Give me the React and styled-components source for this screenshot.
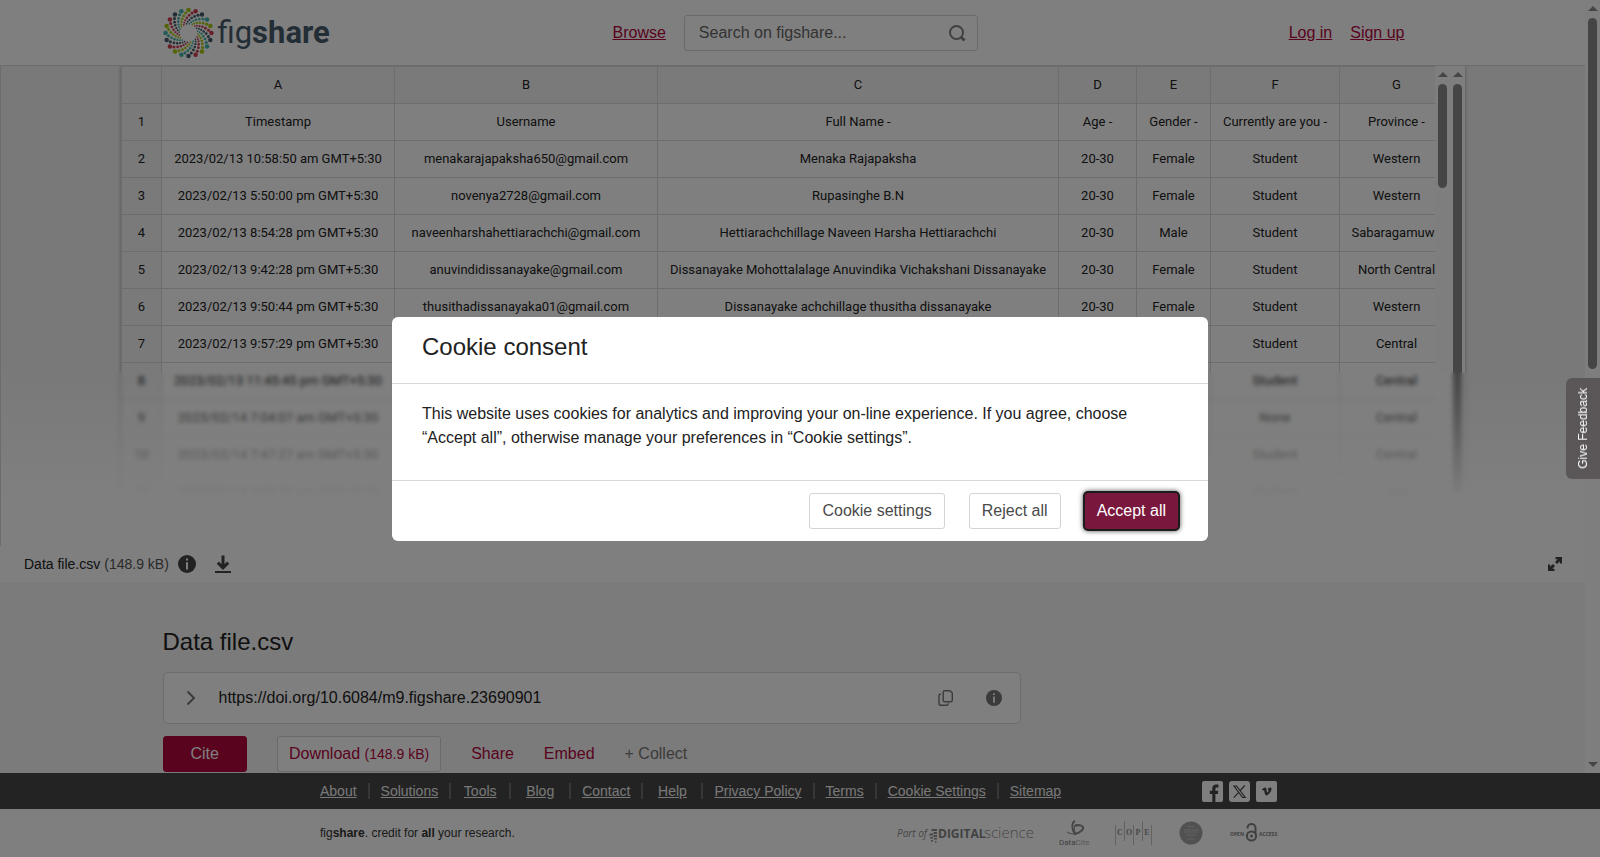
import React from 'react';
import styled, { createGlobalStyle } from 'styled-components';

const GlobalStyle = createGlobalStyle`
  *, *::before, *::after {
    box-sizing: border-box;
  }

  body {
    margin: 0;
    font-family: "Liberation Sans", Arial, sans-serif;
    font-size: 16px;
    line-height: 24px;
    color: #222;
  }
`;

const Page = styled.div`
  display: flex;
  flex-direction: column;
  height: 100vh;
  overflow: hidden;
`;

const ScrollArea = styled.div`
  flex: 1;
  min-height: 0;
  display: flex;
  overflow: hidden;
  background: #f6f6f6;
`;

const Content = styled.div`
  flex: 1;
  min-width: 0;
`;

/* Scrollbars */
const Track = styled.div`
  flex: none;
  width: 15px;
  padding: 6px 3px;
  display: flex;
  flex-direction: column;
  align-items: center;
  background: #fcfcfc;
`;

const Arrow = styled.span`
  width: 0;
  height: 0;
  border: 5px solid transparent;
  border-top-width: ${(props) => (props.$down ? '5px' : '0')};
  border-bottom-width: ${(props) => (props.$down ? '0' : '5px')};
  border-top-color: ${(props) => (props.$down ? '#8b8b8b' : 'transparent')};
  border-bottom-color: ${(props) => (props.$down ? 'transparent' : '#8b8b8b')};
`;

const Thumb = styled.span`
  width: 9px;
  height: ${(props) => props.$size};
  margin: 7px 0 auto;
  border-radius: 5px;
  background: #8b8b8b;
`;

/* Header */
const Header = styled.header`
  height: 65px;
  background: #fff;
`;

const HeaderInner = styled.div`
  display: grid;
  grid-template-columns: 450px 365px 1fr;
  align-items: center;
  max-width: 1260px;
  height: 65px;
  margin: 0 auto;
`;

const LogoLink = styled.a`
  display: flex;
  align-items: center;
  gap: 4px;
  color: #465b6b;
  text-decoration: none;
`;

const Wordmark = styled.span`
  font-family: Roboto, sans-serif;
  font-size: 31px;
  font-weight: ${(props) => (props.$bold ? 700 : 400)};
  line-height: 40px;
`;

const TextLink = styled.a`
  color: #b3063d;
  text-decoration: underline;
`;

const HeaderNav = styled.nav`
  display: flex;
  align-items: center;
  gap: 18px;
`;

const AccountNav = styled.nav`
  display: flex;
  justify-content: flex-end;
  gap: 18px;
  padding-right: 18px;
`;

const SearchForm = styled.form`
  flex: 1;
  display: flex;
  align-items: center;
  height: 36px;
  padding: 0 11px 0 14px;
  border: 1px solid #d4d4d4;
  border-radius: 3px;
`;

const SearchInput = styled.input`
  flex: 1;
  min-width: 0;
  padding: 0;
  border: none;
  outline: none;
  background: none;
  font: inherit;

  &::placeholder {
    color: #666;
    opacity: 1;
  }
`;

const IconButton = styled.button`
  display: flex;
  align-items: center;
  justify-content: center;
  padding: 0;
  border: none;
  background: none;
  color: ${(props) => props.$color || '#444'};
  cursor: pointer;
`;

/* File viewer */
const Viewer = styled.section`
  position: relative;
  height: 481px;
  padding: 0 120px;
  border-top: 1px solid #d8d8d8;
  border-left: 1px solid #d8d8d8;
  background: #f3f3f3;
  overflow: hidden;
`;

const Sheet = styled.div`
  display: flex;
  height: 480px;
  background: #fff;
  box-shadow: 0 0 4px rgba(0, 0, 0, 0.3);
`;

const SheetScroll = styled.div`
  flex: 1;
  min-width: 0;
  overflow: hidden;
`;

const SheetBar = styled.div`
  display: flex;
  height: ${(props) => props.$height};
`;

const Table = styled.table`
  width: 1332px;
  table-layout: fixed;
  border-collapse: collapse;
  font-family: Roboto, sans-serif;
  font-size: 13px;
  line-height: 16px;
  color: #222;
`;

const Cell = styled.td`
  height: 37px;
  padding: 0;
  border: 1px solid #dadada;
  text-align: center;
  white-space: nowrap;
`;

const HeadCell = styled(Cell)`
  background: #f5f5f5;
  font-weight: 400;
`;

const Fade = styled.div`
  position: absolute;
  top: 306px;
  right: 0;
  bottom: 0;
  left: 0;
  backdrop-filter: blur(2px);
  background: linear-gradient(rgba(255, 255, 255, 0), #fff 74%);
`;

const FileBar = styled.div`
  display: flex;
  align-items: center;
  height: 36px;
  padding: 0 23px 0 24px;
  background: #fff;
  font-size: 14px;
`;

const FileSize = styled.span`
  margin: 0 9px 0 4px;
  color: #555;
`;

const FileActions = styled.div`
  flex: 1;
  display: flex;
  gap: 18px;
`;

/* Item details */
const Details = styled.main`
  max-width: 1260px;
  margin: 0 auto;
  padding-top: 45px;
`;

const Title = styled.h1`
  margin: 0;
  font-size: 24px;
  font-weight: 400;
  line-height: 30px;
`;

const DoiBox = styled.div`
  display: flex;
  align-items: center;
  max-width: 858px;
  height: 52px;
  margin: 15px 0 12px;
  padding: 0 18px 0 22px;
  border: 1px solid #d8d8d8;
  border-radius: 5px;
  background: #fff;
`;

const DoiText = styled.span`
  flex: 1;
  margin-left: 23px;
`;

const DoiActions = styled.div`
  display: flex;
  gap: 32px;
`;

const Actions = styled.div`
  display: flex;
  gap: 30px;
`;

const Button = styled.button`
  height: 36px;
  padding: 0 12px;
  border: 1px solid #d4d4d4;
  border-radius: 3px;
  background: #fff;
  color: #4a4a4a;
  font: inherit;
  cursor: pointer;

  small {
    font-size: 14px;
  }
`;

const CiteButton = styled(Button)`
  padding: 0 27px;
  border-color: #b3063d;
  background: #b3063d;
  color: #fff;
`;

const DownloadButton = styled(Button)`
  padding: 0 11px;
  color: #b3063d;
`;

const PlainButton = styled(Button)`
  padding: 0;
  border: none;
  background: none;
  color: ${(props) => (props.$muted ? '#777' : '#b3063d')};
`;

/* Footer */
const FooterBar = styled.footer`
  flex: none;
  background: ${(props) => (props.$dark ? '#464646' : '#fff')};
`;

const FooterInner = styled.div`
  display: flex;
  align-items: center;
  justify-content: space-between;
  max-width: 960px;
  height: ${(props) => (props.$tall ? '48px' : '36px')};
  margin: 0 auto;
`;

const FooterList = styled.ul`
  display: flex;
  margin: 0;
  padding: 0;
  list-style: none;
  font-size: 14px;
  line-height: 16px;
`;

const FooterItem = styled.li`
  min-width: 60px;
  padding: 0 11px;
  border-left: 2px solid #6e6e6e;
  text-align: center;

  &:first-child {
    min-width: 0;
    padding-left: 0;
    border-left: none;
  }

  a {
    color: #f0f0f0;
  }
`;

const Social = styled.div`
  display: flex;
  gap: 6px;
  padding-right: 3px;

  a {
    display: flex;
  }
`;

const Credit = styled.p`
  margin: 0;
  font-size: 12px;
  color: #333;
`;

const Partners = styled.div`
  display: flex;
  align-items: center;
  gap: 26px;

  svg {
    display: block;
    overflow: visible;
  }
`;

/* Dialog */
const Backdrop = styled.div`
  position: fixed;
  inset: 0;
  display: flex;
  align-items: flex-start;
  justify-content: center;
  padding-top: 317px;
  background: rgba(0, 0, 0, 0.5);
`;

const Dialog = styled.div`
  width: 51%;
  border-radius: 6px;
  background: #fff;
`;

const DialogHeader = styled.div`
  padding: 15px 30px 21px;
  border-bottom: 1px solid #d8d8d8;
`;

const DialogTitle = styled.h2`
  margin: 0;
  font-size: 24px;
  font-weight: 400;
  line-height: 30px;
`;

const DialogBody = styled.p`
  margin: 0;
  padding: 18px 30px 30px;
`;

const DialogFooter = styled.div`
  display: flex;
  justify-content: flex-end;
  gap: 24px;
  padding: 12px 30px;
  border-top: 1px solid #d8d8d8;
`;

const AcceptButton = styled(Button)`
  border: none;
  background: #7a173d;
  color: #fff;
  box-shadow: 0 0 0 2px #1c1c1c, 0 0 5px 2px rgba(0, 0, 0, 0.7);
`;

const FeedbackButton = styled.button`
  position: fixed;
  top: 378px;
  right: 0;
  display: flex;
  align-items: center;
  justify-content: center;
  width: 34px;
  height: 101px;
  padding: 0;
  border: none;
  border-radius: 6px 0 0 6px;
  background: #5b5759;
  color: #fff;
  font: inherit;
  font-size: 12px;
  cursor: pointer;

  span {
    writing-mode: vertical-rl;
    transform: rotate(180deg);
  }
`;

const columns = [
  { name: 'A', width: 233 },
  { name: 'B', width: 263 },
  { name: 'C', width: 401 },
  { name: 'D', width: 78 },
  { name: 'E', width: 74 },
  { name: 'F', width: 129 },
  { name: 'G', width: 114 }
];

const rows = [
  ['Timestamp', 'Username', 'Full Name -', 'Age -', 'Gender -', 'Currently are you -', 'Province -'],
  ['2023/02/13 10:58:50 am GMT+5:30', 'menakarajapaksha650@gmail.com', 'Menaka Rajapaksha', '20-30', 'Female', 'Student', 'Western'],
  ['2023/02/13 5:50:00 pm GMT+5:30', 'novenya2728@gmail.com', 'Rupasinghe B.N', '20-30', 'Female', 'Student', 'Western'],
  ['2023/02/13 8:54:28 pm GMT+5:30', 'naveenharshahettiarachchi@gmail.com', 'Hettiarachchillage Naveen Harsha Hettiarachchi', '20-30', 'Male', 'Student', 'Sabaragamuwa'],
  ['2023/02/13 9:42:28 pm GMT+5:30', 'anuvindidissanayake@gmail.com', 'Dissanayake Mohottalalage Anuvindika Vichakshani Dissanayake', '20-30', 'Female', 'Student', 'North Central'],
  ['2023/02/13 9:50:44 pm GMT+5:30', 'thusithadissanayaka01@gmail.com', 'Dissanayake achchillage thusitha dissanayake', '20-30', 'Female', 'Student', 'Western'],
  ['2023/02/13 9:57:29 pm GMT+5:30', '', '', '', '', 'Student', 'Central'],
  ['2023/02/13 11:45:45 pm GMT+5:30', '', '', '', '', 'Student', 'Central'],
  ['2023/02/14 7:04:07 am GMT+5:30', '', '', '', '', 'None', 'Central'],
  ['2023/02/14 7:47:27 am GMT+5:30', '', '', '', '', 'Student', 'Central'],
  ['2023/02/14 3:09:29 pm GMT+5:30', '', '', '', '', 'Student', 'Uva']
];

const footerLinks = ['About', 'Solutions', 'Tools', 'Blog', 'Contact', 'Help', 'Privacy Policy', 'Terms', 'Cookie Settings', 'Sitemap'];

const armColors = ['#a8c80f', '#cd3e52', '#465b6b', '#45b5aa'];

// 20 arms of shrinking dots, each one turning as it gets closer to the centre
const LogoMark = () => {
  const dots = [];
  for (let arm = 0; arm < 20; arm++) {
    for (let i = 0; i < 7; i++) {
      const radius = 23.4 - i * 2.9 + i * i * 0.1;
      const angle = ((arm * 18 - 90 - i * 8) * Math.PI) / 180;
      dots.push(
        <circle
          key={`${arm}-${i}`}
          cx={26 + radius * Math.cos(angle)}
          cy={26 + radius * Math.sin(angle)}
          r={i === 0 ? 2.3 : 1.7 - i * 0.14}
          fill={armColors[arm % 4]}
        />
      );
    }
  }
  return <svg width="51" height="52" viewBox="0 0 52 52">{dots}</svg>;
};

const SearchIcon = () => (
  <svg width="18" height="18" viewBox="0 0 18 18" fill="none" stroke="currentColor">
    <circle cx="8.5" cy="8.5" r="6.5" strokeWidth="2" />
    <path d="M13 13l3.5 3.5" strokeWidth="3" />
  </svg>
);

const InfoIcon = ({ size }) => (
  <svg width={size} height={size} viewBox="0 0 18 18">
    <circle cx="9" cy="9" r="9" fill="currentColor" />
    <path d="M9 3.6v2M9 7.2v7.2" stroke="#fff" strokeWidth="2" />
  </svg>
);

const DownloadIcon = () => (
  <svg width="18" height="18" viewBox="0 0 18 18" fill="none" stroke="currentColor">
    <path d="M9 .5v12.5M3.8 7.6L9 12.8l5.2-5.2" strokeWidth="3" />
    <path d="M1 17h16" strokeWidth="2" />
  </svg>
);

const ExpandIcon = () => (
  <svg width="14" height="14" viewBox="0 0 14 14" fill="currentColor">
    <path d="M7.5 0H14v6.5h-2.2V4.3L9 7 7 5l2.7-2.8H7.5z" />
    <path d="M6.5 14H0V7.5h2.2v2.2L5 7l2 2-2.7 2.8h2.2z" />
  </svg>
);

const ChevronIcon = () => (
  <svg width="10" height="16" viewBox="0 0 10 16" fill="none" stroke="#777" strokeWidth="2">
    <path d="M1.5 1.5L8 8l-6.5 6.5" />
  </svg>
);

const CopyIcon = () => (
  <svg width="16" height="16" viewBox="0 0 16 16" fill="none" stroke="currentColor" strokeWidth="1.4">
    <path d="M6.7.7H12L14.3 3v7.2a1.5 1.5 0 0 1-1.5 1.5H6.7a1.5 1.5 0 0 1-1.5-1.5v-8A1.5 1.5 0 0 1 6.7.7z" />
    <path d="M3 4.2h-.8A1.2 1.2 0 0 0 1 5.4v8.4a1.5 1.5 0 0 0 1.5 1.5h6.2a1.5 1.5 0 0 0 1.5-1.5v-.6" />
  </svg>
);

const FacebookIcon = () => (
  <svg width="21" height="21" viewBox="0 0 21 21">
    <rect width="21" height="21" rx="2" fill="#fff" />
    <path d="M10.3 21v-8H7.8V9.8h2.5V7.6c0-2.6 1.5-4 3.9-4 1.1 0 2 .1 2.3.1v2.7h-1.6c-1.2 0-1.5.6-1.5 1.5v1.9h2.9l-.4 3.2h-2.5v8z" fill="#464646" />
  </svg>
);

const XIcon = () => (
  <svg width="21" height="21" viewBox="0 0 21 21">
    <rect width="21" height="21" rx="3" fill="#fff" />
    <path d="M5 5h2.6l8.6 11.500h-2.6z" fill="none" stroke="#464646" strokeWidth="1.2" />
    <path d="M15.8 4.5l-4.7 5.2M9.7 11.3l-5 5.4" stroke="#464646" strokeWidth="1.2" />
  </svg>
);

const VimeoIcon = () => (
  <svg width="21" height="21" viewBox="0 0 21 21">
    <rect width="21" height="21" rx="2" fill="#fff" />
    <path d="M6 8.6c1.2-1.1 2.2-2 3-2 1 0 1.3.9 1.5 2.2.2 1.4.5 2.7.9 2.7s1.4-1.6 1.3-2.2c-.1-.6-.6-.6-1.1-.4.5-1.7 1.5-2.5 2.7-2.4 1 .1 1.3.8 1.2 1.8-.2 2.4-3.400 6.200-5 6.200-1.500 0-1.700-2.300-2.200-4.200-.3-1.100-.5-1.500-1.600-.7z" fill="#464646" />
  </svg>
);

const DigitalScienceLogo = () => (
  <svg width="136" height="24" viewBox="0 0 136 24" fill="#8d8d8d">
    <text x="0" y="16" fontFamily="Open Sans" fontSize="10" fontStyle="italic">Part of</text>
    <path d="M35 8h5v2h-6zM37 11h3v2h-4zM33 12.500h3v2h-4zM37 14h3v2h-4zM33 16h3v1.500h-3zM37 17h3v1.500h-3zM34 19h2v1.500h-2zM38 20h1.500v1.500H38z" />
    <text x="41" y="17" fontFamily="Open Sans" fontSize="12" fontWeight="700" fill="#858585">DIGITAL</text>
    <text x="87" y="17" fontFamily="Open Sans" fontSize="15" fontWeight="300">science</text>
  </svg>
);

const DataCiteLogo = () => (
  <svg width="30" height="26" viewBox="0 0 30 26" fill="none">
    <path d="M16 1c-4 2-3 9 0 13 4-1 9-4 8-7-1-2-6-2-8-1" stroke="#8d8d8d" strokeWidth="2" />
    <path d="M8 12c3 2 6 2 9 2-2-3-2-6-1-9 3-1 8 0 8 2 0 4-6 7-8 7" stroke="#8d8d8d" strokeWidth="1" />
    <text x="0" y="25" fontFamily="Roboto" fontSize="8" fill="#808080">Data<tspan fill="#b0b0b0">Cite</tspan></text>
  </svg>
);

const CopeLogo = () => (
  <svg width="38" height="26" viewBox="0 0 38 26">
    <path d="M.5 5v20M9.5 1v20M18.5 5v20M27.5 1v20M36.5 5v20" stroke="#c4c4c4" />
    <g fontFamily="Liberation Serif" fontSize="8" fontWeight="700" fill="#909090" textAnchor="middle">
      <text x="5" y="15">C</text>
      <text x="14" y="15">O</text>
      <text x="23" y="15">P</text>
      <text x="32" y="15">E</text>
    </g>
  </svg>
);

const BadgeLogo = () => (
  <svg width="24" height="24" viewBox="0 0 24 24">
    <circle cx="12" cy="12" r="11.5" fill="#a3a3a3" />
    <path d="M8 5.5h8M5 9h14M5 11h14M7 14h10M8 18h8" stroke="#c8c8c8" strokeDasharray="2 .6" />
  </svg>
);

const OpenAccessLogo = () => (
  <svg width="51" height="20" viewBox="0 0 51 20">
    <g fontFamily="Open Sans" fontSize="5" fontWeight="700" fill="#808080">
      <text x="1" y="13">OPEN</text>
      <text x="30" y="13">ACCESS</text>
    </g>
    <g fill="none" stroke="#808080" strokeWidth="2">
      <circle cx="22.5" cy="13" r="4.6" />
      <path d="M18.5 5.500V5a4 4 0 0 1 8 0v6" />
    </g>
    <circle cx="22.5" cy="13" r="1.5" fill="#808080" />
  </svg>
);

const SpreadSheet = () => (
  <Table>
    <colgroup>
      <col style={{ width: 40 }} />
      {columns.map((column) => (
        <col key={column.name} style={{ width: column.width }} />
      ))}
    </colgroup>
    <thead>
      <tr>
        <HeadCell as="th" />
        {columns.map((column) => (
          <HeadCell as="th" key={column.name}>{column.name}</HeadCell>
        ))}
      </tr>
    </thead>
    <tbody>
      {rows.map((row, index) => (
        <tr key={row[0]}>
          <HeadCell as="th">{index + 1}</HeadCell>
          {row.map((value, i) => (
            <Cell key={columns[i].name}>{value}</Cell>
          ))}
        </tr>
      ))}
    </tbody>
  </Table>
);

const CookieDialog = () => (
  <Backdrop>
    <Dialog role="dialog" aria-labelledby="cookie-title">
      <DialogHeader>
        <DialogTitle id="cookie-title">Cookie consent</DialogTitle>
      </DialogHeader>
      <DialogBody>
        This website uses cookies for analytics and improving your on-line experience. If you agree, choose “Accept all”, otherwise manage your preferences in “Cookie settings”.
      </DialogBody>
      <DialogFooter>
        <Button>Cookie settings</Button>
        <Button>Reject all</Button>
        <AcceptButton>Accept all</AcceptButton>
      </DialogFooter>
    </Dialog>
  </Backdrop>
);

const App = () => (
  <>
    <GlobalStyle />
    <Page>
      <ScrollArea>
        <Content>
          <Header>
            <HeaderInner>
              <LogoLink href="#home" aria-label="figshare">
                <LogoMark />
                <span>
                  <Wordmark>fig</Wordmark>
                  <Wordmark $bold>share</Wordmark>
                </span>
              </LogoLink>
              <HeaderNav>
                <TextLink href="#browse">Browse</TextLink>
                <SearchForm>
                  <SearchInput type="text" placeholder="Search on figshare..." aria-label="Search on figshare" />
                  <IconButton type="button" aria-label="Search" $color="#808080">
                    <SearchIcon />
                  </IconButton>
                </SearchForm>
              </HeaderNav>
              <AccountNav>
                <TextLink href="#login">Log in</TextLink>
                <TextLink href="#signup">Sign up</TextLink>
              </AccountNav>
            </HeaderInner>
          </Header>

          <Viewer>
            <Sheet>
              <SheetScroll>
                <SpreadSheet />
              </SheetScroll>
              <SheetBar $height="306px">
                <Track>
                  <Arrow />
                  <Thumb $size="104px" />
                </Track>
              </SheetBar>
              <SheetBar $height="480px">
                <Track>
                  <Arrow />
                  <Thumb $size="410px" />
                </Track>
              </SheetBar>
            </Sheet>
            <Fade />
          </Viewer>

          <FileBar>
            <span>Data file.csv</span>
            <FileSize>(148.9 kB)</FileSize>
            <FileActions>
              <IconButton aria-label="File details"><InfoIcon size={18} /></IconButton>
              <IconButton aria-label="Download file"><DownloadIcon /></IconButton>
            </FileActions>
            <IconButton aria-label="Enter full screen"><ExpandIcon /></IconButton>
          </FileBar>

          <Details>
            <Title>Data file.csv</Title>
            <DoiBox>
              <IconButton aria-label="More identifiers"><ChevronIcon /></IconButton>
              <DoiText>https://doi.org/10.6084/m9.figshare.23690901</DoiText>
              <DoiActions>
                <IconButton aria-label="Copy DOI" $color="#777"><CopyIcon /></IconButton>
                <IconButton aria-label="About the DOI" $color="#777"><InfoIcon size={16} /></IconButton>
              </DoiActions>
            </DoiBox>
            <Actions>
              <CiteButton>Cite</CiteButton>
              <DownloadButton>Download <small>(148.9 kB)</small></DownloadButton>
              <PlainButton>Share</PlainButton>
              <PlainButton>Embed</PlainButton>
              <PlainButton $muted>+ Collect</PlainButton>
            </Actions>
          </Details>
        </Content>
        <Track>
          <Arrow />
          <Thumb $size="351px" />
          <Arrow $down />
        </Track>
      </ScrollArea>

      <FooterBar $dark>
        <FooterInner>
          <FooterList>
            {footerLinks.map((link) => (
              <FooterItem key={link}>
                <a href="#footer">{link}</a>
              </FooterItem>
            ))}
          </FooterList>
          <Social>
            <a href="#facebook" aria-label="Facebook"><FacebookIcon /></a>
            <a href="#x" aria-label="X"><XIcon /></a>
            <a href="#vimeo" aria-label="Vimeo"><VimeoIcon /></a>
          </Social>
        </FooterInner>
      </FooterBar>
      <FooterBar>
        <FooterInner $tall>
          <Credit>
            fig<b>share</b>. credit for <b>all</b> your research.
          </Credit>
          <Partners>
            <DigitalScienceLogo />
            <DataCiteLogo />
            <CopeLogo />
            <BadgeLogo />
            <OpenAccessLogo />
          </Partners>
        </FooterInner>
      </FooterBar>
    </Page>
    <CookieDialog />
    <FeedbackButton>
      <span>Give Feedback</span>
    </FeedbackButton>
  </>
);

export default App;
